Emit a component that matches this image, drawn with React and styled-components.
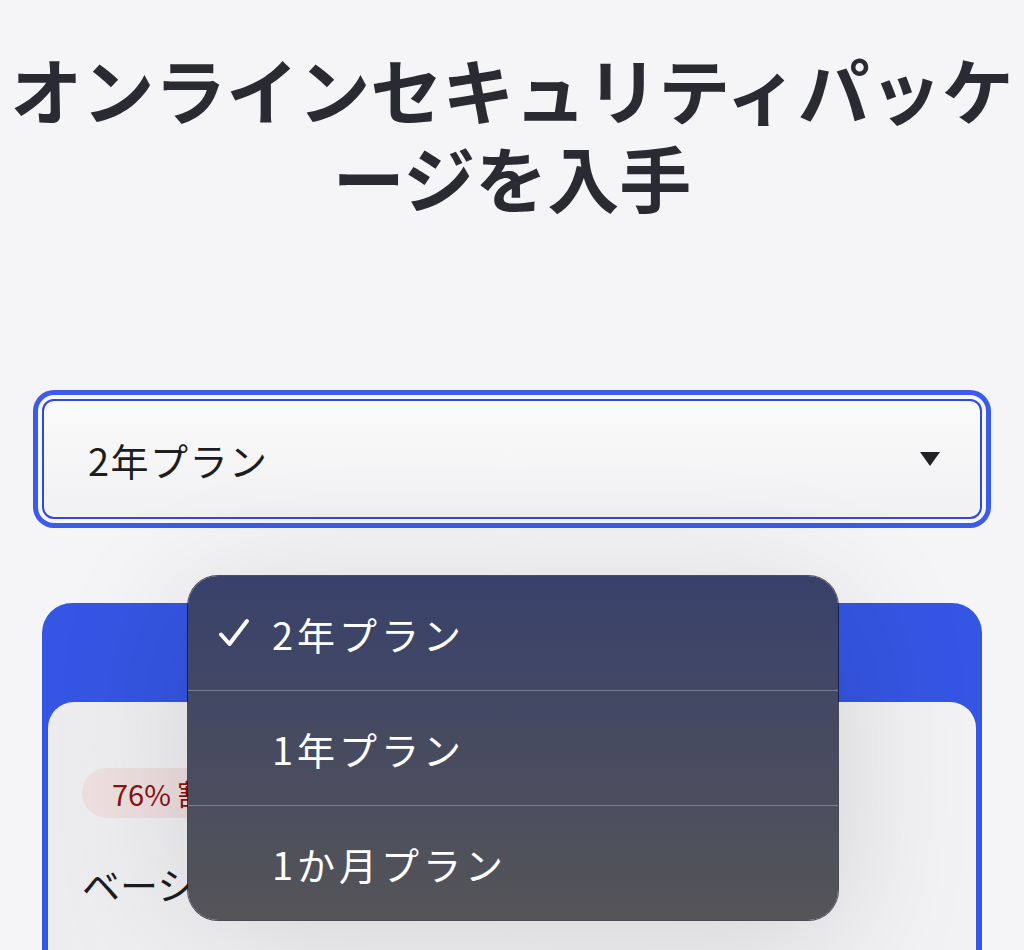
import React from "react";
import styled, { createGlobalStyle } from "styled-components";

const GlobalStyle = createGlobalStyle`
  html, body {
    margin: 0;
    padding: 0;
    background-color: #f5f5f7;
    font-family: "Noto Sans CJK JP", "Noto Sans", sans-serif;
    color: #1d1d1f;
  }
`;

const Page = styled.main`
  height: 950px;
  overflow: hidden;
  box-sizing: border-box;
  padding: 44px 42px 0;
`;

const Title = styled.h1`
  margin: 0 -38px;
  font-size: 72px;
  line-height: 88px;
  font-weight: 700;
  color: #2a2a33;
  text-align: center;
  line-break: anywhere;
`;

const SelectWrap = styled.div`
  position: relative;
  margin-top: 179px;
`;

const SelectBox = styled.div`
  height: 120px;
  box-sizing: border-box;
  display: flex;
  align-items: center;
  justify-content: space-between;
  padding: 0 40px 0 44px;
  border: 2px solid #2f49d9;
  border-radius: 12px;
  background: linear-gradient(#fafafb, #f1f1f3);
  box-shadow: 0 0 0 4px #f6f7fb, 0 0 0 9px #3b5be8;
`;

const SelectValue = styled.span`
  font-size: 38px;
  letter-spacing: 1.5px;
  color: #1d1d1f;
`;

const Caret = styled.svg`
  width: 20px;
  height: 14px;
  fill: #222226;
`;

const Menu = styled.ul`
  position: absolute;
  z-index: 2;
  top: calc(100% + 57px);
  left: 146px;
  width: 650px;
  margin: 0;
  padding: 0;
  list-style: none;
  border-radius: 30px;
  overflow: hidden;
  background: linear-gradient(#38416b, #474b60 50%, #555557);
  box-shadow: 0 20px 140px rgba(0, 0, 0, 0.14), 0 0 0 1px rgba(10, 12, 30, 0.7);
`;

const MenuItem = styled.li`
  height: 114px;
  display: flex;
  align-items: center;
  padding-left: 30px;
  color: #ffffff;
  font-size: 38px;
  letter-spacing: 4px;
  & + & {
    border-top: 1px solid rgba(255, 255, 255, 0.28);
  }
`;

const CheckSlot = styled.span`
  width: 54px;
  display: flex;
  align-items: center;
`;

const Card = styled.section`
  margin-top: 84px;
  background-color: #3556e4;
  border-radius: 30px;
  padding: 0 6px;
`;

const CardHead = styled.div`
  height: 99px;
  display: flex;
  align-items: center;
  justify-content: center;
  color: #ffffff;
  font-size: 32px;
  font-weight: 700;
`;

const Panel = styled.div`
  min-height: 400px;
  border-radius: 26px 26px 0 0;
  background: linear-gradient(90deg, #ececee, #f4f4f6 20%, #f2f2f4);
  padding: 66px 34px 0;
`;

const Badge = styled.span`
  display: inline-flex;
  align-items: center;
  height: 50px;
  padding: 0 30px;
  border-radius: 25px;
  background-color: #efe0e0;
  color: #8a1212;
  font-size: 29px;
`;

const PlanName = styled.h2`
  margin: 38px 0 0;
  font-size: 38px;
  font-weight: 400;
  color: #1d1d1f;
`;

const options = ["2年プラン", "1年プラン", "1か月プラン"];

function CheckIcon() {
  return (
    <svg width="32" height="32" viewBox="0 0 32 32">
      <path
        d="M3 17.5 L11.5 27 L29 4"
        fill="none"
        stroke="#ffffff"
        strokeWidth="4"
        strokeLinecap="round"
        strokeLinejoin="round"
      />
    </svg>
  );
}

export default function App() {
  const selected = options[0];

  return (
    <>
      <GlobalStyle />
      <Page>
        <Title>オンラインセキュリティパッケージを入手</Title>

        <SelectWrap>
          <SelectBox>
            <SelectValue>{selected}</SelectValue>
            <Caret viewBox="0 0 20 14">
              <polygon points="0,0 20,0 10,14" />
            </Caret>
          </SelectBox>

          <Menu>
            {options.map((opt) => (
              <MenuItem key={opt}>
                <CheckSlot>{opt === selected && <CheckIcon />}</CheckSlot>
                {opt}
              </MenuItem>
            ))}
          </Menu>
        </SelectWrap>

        <Card>
          <CardHead>おすすめ</CardHead>
          <Panel>
            <Badge>76% 割引</Badge>
            <PlanName>ベーシック</PlanName>
          </Panel>
        </Card>
      </Page>
    </>
  );
}
